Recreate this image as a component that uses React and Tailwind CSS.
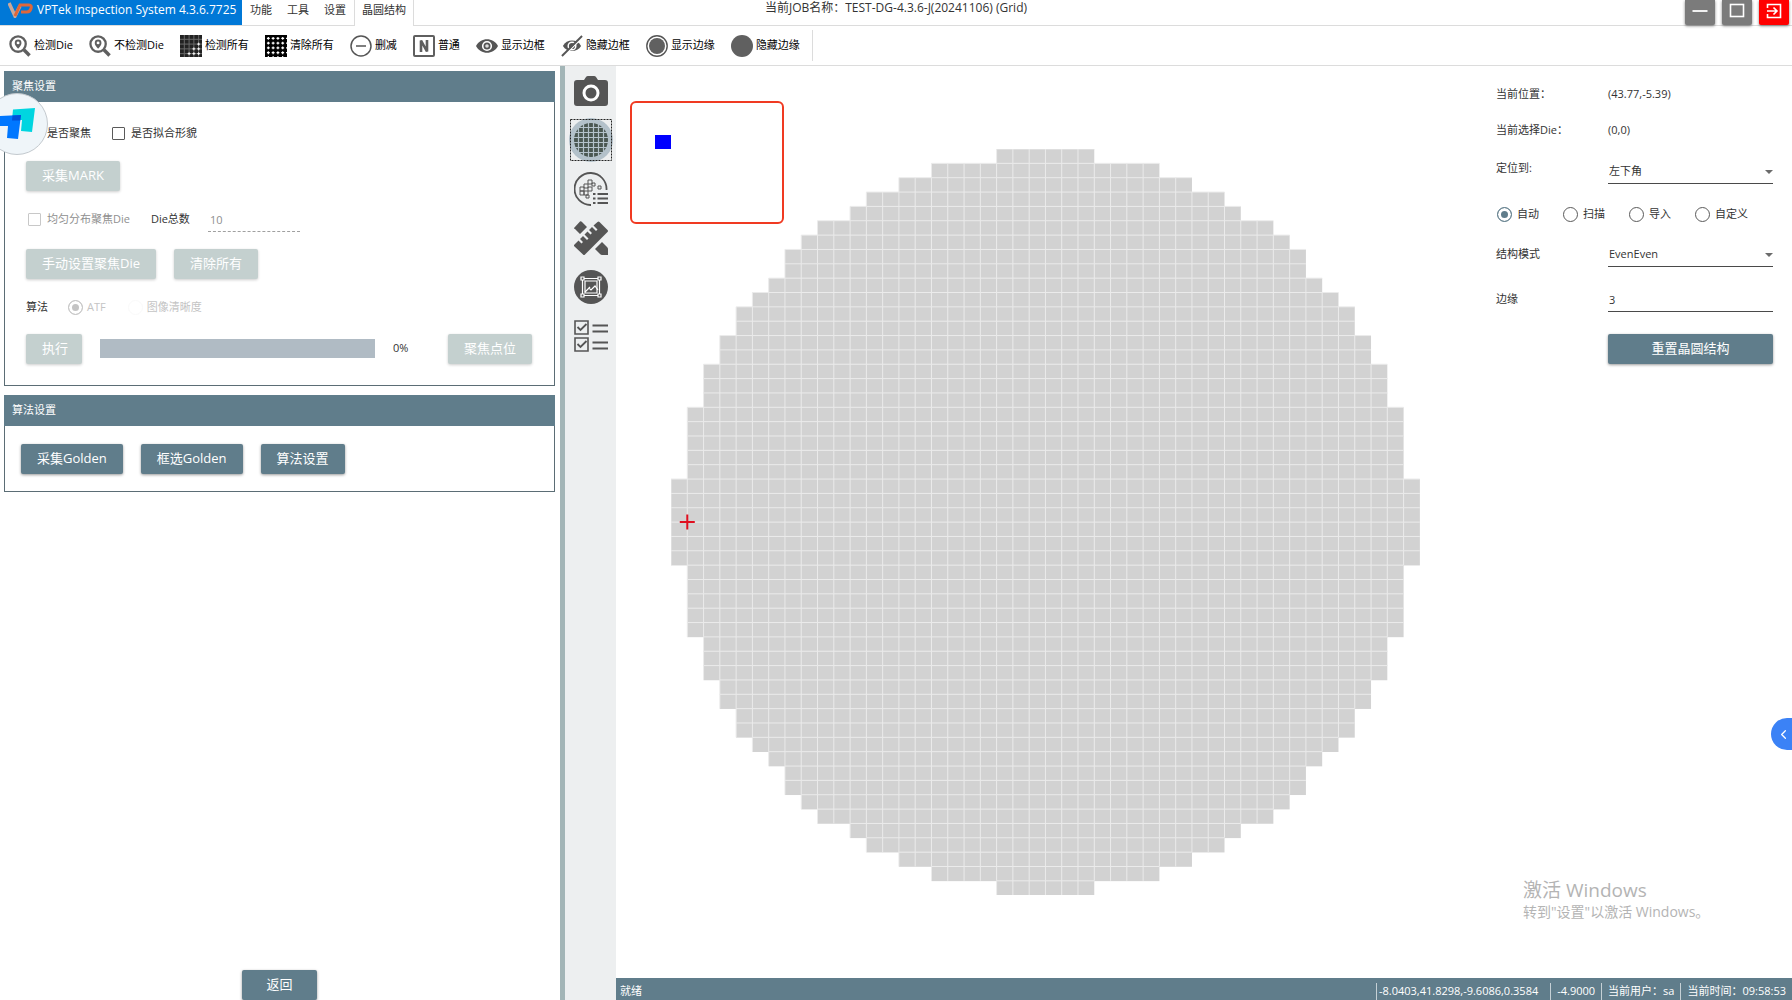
import { ChevronLeft } from 'lucide-react'
import clsx from 'clsx'

const menus = ['功能', '工具', '设置']

const toolbarItems = [
  { label: '检测Die',   icon: PinSearchIcon  },
  { label: '不检测Die', icon: PinSearchIcon  },
  { label: '检测所有',  icon: GridCheckIcon  },
  { label: '清除所有',  icon: GridClearIcon  },
  { label: '删减',      icon: MinusIcon      },
  { label: '普通',      icon: NormalIcon     },
  { label: '显示边框',  icon: EyeIcon        },
  { label: '隐藏边框',  icon: EyeOffIcon     },
  { label: '显示边缘',  icon: RingIcon       },
  { label: '隐藏边缘',  icon: DiscIcon       },
]

const railItems = [
  { label: '相机', icon: CameraIcon    },
  { label: '晶圆', icon: WaferIcon     },
  { label: '分布', icon: WaferListIcon },
  { label: '测量', icon: RulerIcon     },
  { label: '图像', icon: FrameIcon     },
  { label: '清单', icon: ChecklistIcon },
]

const modes = ['自动', '扫描', '导入', '自定义']

// First filled column of every row in the upper half, the lower half mirrors it
const rowStarts = [
  20, 16, 14, 12, 11, 9, 8, 7, 7, 6, 5, 4, 4,
  3, 3, 2, 2, 2, 1, 1, 1, 1, 1, 0, 0, 0,
]
const rows = [...rowStarts, ...[...rowStarts].reverse()]
const COLS = 46
const DIE_W = 16.28
const DIE_H = 14.35

/* ---------- toolbar icons ---------- */

function PinSearchIcon() {
  return (
    <svg width="22" height="22" viewBox="0 0 23 23" fill="none" stroke="#5f5f5f">
      <circle cx="9.5" cy="9.5" r="8" strokeWidth="2.4" />
      <path d="M15.5 15.5l6 6" strokeWidth="3.6" />
      <path d="M9.5 14.5C7 11.5 6 10 6 8.3a3.5 3.5 0 0 1 7 0c0 1.7-1 3.2-3.5 6.2z" fill="#5f5f5f" stroke="none" />
      <circle cx="9.5" cy="8.3" r="1.5" fill="#fff" stroke="none" />
    </svg>
  )
}

function GridCheckIcon() {
  return (
    <svg width="22" height="22" viewBox="0 0 23 23">
      <rect width="23" height="23" fill="#222" />
      <path d="M4.5 0v23M9.5 0v23M14.5 0v23M19.5 0v23M0 4.5h23M0 9.5h23M0 14.5h23M0 19.5h23" stroke="#6b6b6b" />
      <path d="M14.5 13v3M19.5 13v3M13 14.5h3M18 14.5h3M14.5 18v3M19.5 18v3M13 19.5h3M18 19.5h3M19.5 8v3M18 9.5h3M9.5 18v3M8 19.5h3" stroke="#fff" />
    </svg>
  )
}

function GridClearIcon() {
  return (
    <svg width="22" height="22" viewBox="0 0 23 23">
      <rect width="23" height="23" fill="#000" />
      <path
        d="M3.5 0v23M8.5 0v23M13.5 0v23M18.5 0v23M0 3.5h23M0 8.5h23M0 13.5h23M0 18.5h23"
        stroke="#fff"
        strokeWidth="1.2"
        strokeDasharray="3 2"
        strokeDashoffset="-2"
      />
    </svg>
  )
}

function MinusIcon() {
  return (
    <svg width="22" height="22" viewBox="0 0 22 22" fill="none" stroke="#555">
      <circle cx="11" cy="11" r="10" strokeWidth="1.5" />
      <path d="M6 11h10" strokeWidth="1.5" />
    </svg>
  )
}

function NormalIcon() {
  return (
    <svg width="22" height="22" viewBox="0 0 22 22" fill="none" stroke="#5f5f5f">
      <rect x="1" y="1" width="20" height="20" rx="1" strokeWidth="2" />
      <path d="M8 17V5.5L14 16.5V5" strokeWidth="2.6" />
    </svg>
  )
}

function EyeIcon() {
  return (
    <svg width="22" height="22" viewBox="0 0 22 22">
      <path d="M0 11C4.5 2 17.5 2 22 11C17.5 20 4.5 20 0 11z" fill="#555" />
      <circle cx="11" cy="11" r="4.3" fill="none" stroke="#fff" strokeWidth="1.6" />
      <circle cx="11" cy="11" r="1.8" fill="#ddd" />
    </svg>
  )
}

function EyeOffIcon() {
  return (
    <svg width="22" height="22" viewBox="0 0 23 23">
      <path d="M2 11.5C6 4 17 4 21 11.5C17 18.5 6 18.5 2 11.5z" fill="#555" />
      <circle cx="11.5" cy="11.5" r="4" fill="none" stroke="#fff" strokeWidth="1.5" />
      <path d="M2.5 22.5L23.5 1.5" stroke="#fff" strokeWidth="1.5" />
      <path d="M1 22L22 1" stroke="#555" strokeWidth="2" />
    </svg>
  )
}

function RingIcon() {
  return (
    <svg width="22" height="22" viewBox="0 0 22 22">
      <circle cx="11" cy="11" r="10.2" fill="none" stroke="#555" strokeWidth="1.4" />
      <circle cx="11" cy="11" r="8" fill="#606060" />
    </svg>
  )
}

function DiscIcon() {
  return (
    <svg width="22" height="22" viewBox="0 0 22 22">
      <circle cx="11" cy="11" r="11" fill="#606060" />
    </svg>
  )
}

/* ---------- side rail icons ---------- */

function CameraIcon() {
  return (
    <svg width="34" height="30" viewBox="0 0 34 30">
      <path d="M3 4h7l2-3q.6-1 2-1h6q1.4 0 2 1l2 3h7q3 0 3 3v20q0 3-3 3H3q-3 0-3-3V7q0-3 3-3z" fill="#555" />
      <circle cx="17" cy="17" r="7" fill="none" stroke="#fff" strokeWidth="3" />
    </svg>
  )
}

function WaferIcon() {
  return (
    <svg width="44" height="44" viewBox="0 0 44 44">
      <circle cx="22" cy="22" r="22" fill="#b3c1ca" />
      <circle cx="22" cy="22" r="17" fill="#4a5752" />
      <path
        d="M9.5 8v28M14.5 6v32M19.5 4v36M24.5 4v36M29.5 6v32M34.5 8v28M8 9.5h28M6 14.5h32M4 19.5h36M4 24.5h36M6 29.5h32M8 34.5h28"
        stroke="#b3c1ca"
        strokeWidth="1.2"
      />
      <rect x="1.5" y="1.5" width="41" height="41" fill="none" stroke="#222" strokeDasharray="2 1" />
    </svg>
  )
}

function WaferListIcon() {
  return (
    <svg width="34" height="34" viewBox="0 0 34 34" fill="none" stroke="#555">
      <path d="M17 33A16 16 0 1 1 32.5 18" strokeWidth="1.8" />
      <path d="M6 15h4v4H6zM10 12h4v4h-4zM10 19h4v4h-4zM14 15h4v4h-4zM6 19h4v4H6zM14 8h4v4h-4zM18 11h3v3h-3zM24 14h3v3h-3zM12 23h3v3h-3z" strokeWidth="1" />
      <path d="M23.5 22H34M23.5 26.5H34M23.5 31H34" strokeWidth="1.8" />
      <path d="M19 22h2.5M19 26.5h2.5M19 31h2.5" strokeWidth="1.8" />
    </svg>
  )
}

function RulerIcon() {
  return (
    <svg width="34" height="34" viewBox="0 0 34 34" fill="#555">
      <path d="M0 7L6 0.5Q7 0 8 1l5 5-7 7-5-5Q0 8 0 7z" />
      <path d="M0 24l4.5-4.5 3 3 1.5-1.5-3-3 3-3 4 4 1.5-1.5-4-4 3-3 3 3 1.5-1.5-3-3 3-3 4 4 1.5-1.5-4-4L23.5 1q1-1 2 0l8 8q1 1 0 2L11 33.5q-1 1-2 0L0 25z" />
      <path d="M21 28l7-7 5 5q1 1 1 2v6h-6q-1 0-2-1z" />
    </svg>
  )
}

function FrameIcon() {
  return (
    <svg width="34" height="34" viewBox="0 0 34 34" fill="none">
      <circle cx="17" cy="17" r="17" fill="#555" />
      <g stroke="#fff" strokeWidth="1.2">
        <path d="M10 8.5h14M10 25.5h14M8.5 10v14M25.5 10v14M11 11h12v12H11z" />
        <path d="M7 7h3v3H7zM24 7h3v3h-3zM7 24h3v3H7zM24 24h3v3h-3z" />
        <path d="M11 22l4-4 2 2 4-4 3 4M14 19l2-2" />
      </g>
    </svg>
  )
}

function ChecklistIcon() {
  return (
    <svg width="34" height="32" viewBox="0 0 34 32" fill="none" stroke="#555">
      <path d="M1 1h13v13H1zM1 18h13v13H1z" strokeWidth="1.6" />
      <path d="M3.5 7l3 3 6-6M3.5 24l3 3 6-6" strokeWidth="1.8" />
      <path d="M18.5 5.5H34M18.5 11.5H34M18.5 22.5H34M18.5 28.5H34" strokeWidth="1.8" />
    </svg>
  )
}

/* ---------- shared controls ---------- */

function Button({ children, className, disabled }) {
  return (
    <button
      disabled={disabled}
      className={clsx(
        'h-[30px] px-4 rounded-[2px] text-[13px] text-white whitespace-nowrap',
        disabled
          ? 'bg-[#c4d0cf] shadow-[0_1px_3px_rgba(0,0,0,0.2)]'
          : 'bg-[#607d8b] shadow-[0_1px_3px_rgba(0,0,0,0.4)]',
        className
      )}
    >
      {children}
    </button>
  )
}

function CheckField({ label, disabled }) {
  return (
    <label className={clsx('flex items-center gap-1.5', disabled && 'text-[#8f8f8f]')}>
      <input
        type="checkbox"
        disabled={disabled}
        className="appearance-none w-[13px] h-[13px] border-[1.5px] border-[#5a5a5a] rounded-[1px] disabled:border-[#c8c8c8]"
      />
      {label}
    </label>
  )
}

function Panel({ title, children }) {
  return (
    <section className="border border-[#5b6d75]">
      <h2 className="-mx-px -mt-px h-[31px] px-2 flex items-center bg-[#607d8b] text-white">{title}</h2>
      {children}
    </section>
  )
}

function SelectField({ id, value }) {
  return (
    <div className="relative w-[165px] shrink-0">
      <select id={id} className="appearance-none w-full h-6 px-px border-b border-[#4a4a4a] bg-transparent outline-none">
        <option>{value}</option>
      </select>
      <svg className="absolute right-0 top-2.5 pointer-events-none" width="8" height="4" viewBox="0 0 8 4">
        <path d="M0 0h8L4 4z" fill="#6b6b6b" />
      </svg>
    </div>
  )
}

/* ---------- page sections ---------- */

function TitleBar() {
  return (
    <header className="h-[26px] grid grid-cols-[1fr_auto_1fr] border-b border-[#dcdcdc]">
      <div className="flex h-[26px]">
        <div className="w-[242px] h-[25px] pl-2 pb-1.5 flex items-center gap-1 bg-[#0078d7] text-white text-[12px] whitespace-nowrap">
          <svg width="25" height="16" viewBox="0 0 25 16" fill="none">
            <path d="M1 1l6 13 5-10" stroke="#c9a79a" strokeWidth="3.5" />
            <path d="M7 14l5-11h9q3 0 2 3.5t-4 3.5h-6" stroke="#e0673a" strokeWidth="3" />
          </svg>
          <h1>VPTek Inspection System 4.3.6.7725</h1>
        </div>
        <nav className="flex">
          <div className="flex gap-[15px] px-2">
            {menus.map((label) => (
              <button key={label} className="h-5">{label}</button>
            ))}
          </div>
          <div className="h-[26px] px-[7px] bg-white border-x border-[#dcdcdc]">
            <button className="h-5">晶圆结构</button>
          </div>
        </nav>
      </div>
      <p className="text-[12px] leading-4">当前JOB名称：TEST-DG-4.3.6-J(20241106) (Grid)</p>
      <div className="flex justify-end gap-[7px] pr-[3px]">
        <button aria-label="最小化" className="w-[30px] h-[25px] pb-1 flex items-center justify-center rounded-b-[2px] bg-[#7b7b7b] shadow-[0_1px_3px_rgba(0,0,0,0.5)]">
          <svg width="16" height="16" viewBox="0 0 16 16"><path d="M0.5 8h15" stroke="#fff" strokeWidth="1.8" /></svg>
        </button>
        <button aria-label="最大化" className="w-[30px] h-[25px] pb-1 flex items-center justify-center rounded-b-[2px] bg-[#7b7b7b] shadow-[0_1px_3px_rgba(0,0,0,0.5)]">
          <svg width="16" height="16" viewBox="0 0 16 16"><rect x="1.5" y="1.5" width="13" height="12" fill="none" stroke="#fff" strokeWidth="1.6" /></svg>
        </button>
        <button aria-label="退出" className="w-[30px] h-[25px] pb-1 flex items-center justify-center rounded-b-[2px] bg-[#ff0000] shadow-[0_1px_3px_rgba(0,0,0,0.5)]">
          <svg width="16" height="16" viewBox="0 0 16 16" fill="none" stroke="#fff" strokeWidth="1.6">
            <path d="M1.5 5V1.5h13v13h-13V11M1 8h9.5M7.5 4.5L11 8l-3.5 3.5" />
          </svg>
        </button>
      </div>
    </header>
  )
}

function Toolbar() {
  return (
    <div className="h-10 flex border-b border-[#dcdcdc]">
      <div className="my-1 pl-[9px] pr-3 flex items-center gap-4 border-r border-[#dcdcdc]">
        {toolbarItems.map(({ label, icon: Icon }) => (
          <button key={label} className="flex items-center gap-[3px] whitespace-nowrap text-black">
            <Icon />
            {label}
          </button>
        ))}
      </div>
    </div>
  )
}

function FocusPanel() {
  return (
    <Panel title="聚焦设置">
      <div className="pt-4 pb-[21px] pl-[21px] pr-[22px]">
        <div className="h-[31px] pl-0.5 flex items-center gap-[21px]">
          <CheckField label="是否聚焦" />
          <CheckField label="是否拟合形貌" />
        </div>
        <div className="h-[31px] mt-3">
          <Button disabled>采集MARK</Button>
        </div>
        <div className="h-[31px] mt-3 pl-0.5 flex items-center">
          <CheckField label="均匀分布聚焦Die" disabled />
          <label htmlFor="die-total" className="ml-[21px]">Die总数</label>
          <input
            id="die-total"
            disabled
            defaultValue="10"
            className="ml-[18px] w-[92px] h-6 px-0.5 border-b border-dashed border-[#a0a0a0] text-[#8f8f8f]"
          />
        </div>
        <div className="h-[31px] mt-3.5 flex gap-[18px]">
          <Button disabled>手动设置聚焦Die</Button>
          <Button disabled>清除所有</Button>
        </div>
        <div className="h-[31px] mt-3 flex items-center text-[#c4c4c4]">
          <span className="text-[#333] mr-5">算法</span>
          <label className="flex items-center gap-1">
            <input
              type="radio"
              name="algo"
              disabled
              defaultChecked
              className="appearance-none w-[15px] h-[15px] rounded-full border border-[#c4c4c4] bg-[#c4c4c4] shadow-[inset_0_0_0_3px_#fff]"
            />
            ATF
          </label>
          <label className="ml-[22px] flex items-center gap-1">
            <input type="radio" name="algo" disabled className="appearance-none w-[15px] h-[15px] rounded-full border border-[#fafafa]" />
            图像清晰度
          </label>
        </div>
        <div className="h-[31px] mt-2.5 flex items-center">
          <Button disabled className="w-14">执行</Button>
          <div role="progressbar" aria-valuenow={0} className="ml-[18px] w-[275px] h-[19px] bg-[#b0bbc4]" />
          <span className="ml-[18px]">0%</span>
          <Button disabled className="ml-auto">聚焦点位</Button>
        </div>
      </div>
    </Panel>
  )
}

function LeftPane() {
  return (
    <div className="w-[560px] shrink-0 flex flex-col pl-1 pr-[5px] pt-[5px]">
      <FocusPanel />
      <div className="h-[9px]" />
      <Panel title="算法设置">
        <div className="flex gap-[18px] px-4 pt-[18px] pb-[17px]">
          <Button>采集Golden</Button>
          <Button>框选Golden</Button>
          <Button>算法设置</Button>
        </div>
      </Panel>
      <Button className="mt-auto mx-auto w-[75px]">返回</Button>
    </div>
  )
}

function SideRail() {
  return (
    <nav className="w-[56px] shrink-0 border-l-[5px] border-[#a3b5b7] bg-[#edeff0]">
      {railItems.map(({ label, icon: Icon }) => (
        <button key={label} aria-label={label} className="w-full h-[49px] flex items-center justify-center">
          <Icon />
        </button>
      ))}
    </nav>
  )
}

function WaferMap() {
  const width = COLS * DIE_W
  const height = rows.length * DIE_H
  return (
    <svg width={width} height={height} viewBox={`0 0 ${width} ${height}`}>
      {rows.map((start, r) => {
        const x1 = start * DIE_W
        const x2 = (COLS - start) * DIE_W
        const y = r * DIE_H
        const ticks = Array.from({ length: COLS - start * 2 }, (_, i) => x1 + i * DIE_W)
        return (
          <g key={r}>
            <rect x={x1} y={y} width={x2 - x1} height={DIE_H + 0.3} fill="#d2d2d2" />
            <path
              d={`M${x1} ${y}H${x2}` + ticks.map((x) => `M${x} ${y}v${DIE_H}`).join('')}
              stroke="#ebebeb"
            />
          </g>
        )
      })}
      <path
        d={`M${DIE_W - 7.5} ${height / 2}h15M${DIE_W} ${height / 2 - 7.5}v15`}
        stroke="#e01020"
        strokeWidth="2"
      />
    </svg>
  )
}

function WaferCanvas() {
  return (
    <div className="relative flex-1 min-w-0 flex items-center justify-center">
      <WaferMap />
      {/* Overview of the current die */}
      <div className="absolute left-3.5 top-[35px] w-[154px] h-[123px] border-2 border-[#f03a22] rounded-md">
        <div className="ml-[23px] mt-8 w-4 h-3.5 bg-[#0000ff]" />
      </div>
    </div>
  )
}

function StructureForm() {
  return (
    <aside className="w-[317px] shrink-0 flex flex-col pl-[21px] pr-[19px] pt-4">
      <dl className="grid grid-cols-[112px_1fr] gap-y-3 leading-6">
        <dt>当前位置：</dt>
        <dd>(43.77,-5.39)</dd>
        <dt>当前选择Die：</dt>
        <dd>(0,0)</dd>
      </dl>

      <div className="mt-[18px] flex justify-between">
        <label htmlFor="anchor">定位到:</label>
        <SelectField id="anchor" value="左下角" />
      </div>

      <div className="mt-[22px] pl-px flex items-center gap-6">
        {modes.map((mode, i) => (
          <label key={mode} className="flex items-center gap-[5px]">
            <input
              type="radio"
              name="mode"
              defaultChecked={i === 0}
              className="appearance-none w-[15px] h-[15px] rounded-full border border-[#5a5a5a] checked:border-[#607d8b] checked:bg-[#607d8b] checked:shadow-[inset_0_0_0_3px_#fff]"
            />
            {mode}
          </label>
        ))}
      </div>

      <div className="mt-5 flex items-center justify-between">
        <label htmlFor="structure">结构模式</label>
        <SelectField id="structure" value="EvenEven" />
      </div>

      <div className="mt-[21px] flex items-center justify-between">
        <label htmlFor="edge">边缘</label>
        <input id="edge" defaultValue="3" className="w-[165px] h-6 px-px border-b border-[#4a4a4a] outline-none" />
      </div>

      <Button className="mt-[22px] ml-auto w-[165px]">重置晶圆结构</Button>

      <div className="mt-auto mb-14 pl-[27px] text-[#b4b4b4]">
        <p className="text-[19px] leading-6">激活 Windows</p>
        <p className="text-[14px] leading-5">转到"设置"以激活 Windows。</p>
      </div>
    </aside>
  )
}

function StatusBar() {
  return (
    <footer className="h-[22px] pl-1 pr-1.5 pt-[5px] flex justify-between bg-[#607d8b] text-white">
      <span>就绪</span>
      <div className="flex whitespace-nowrap">
        <span className="border-l border-[#c5d0d5] pl-0.5 pr-3">-8.0403,41.8298,-9.6086,0.3584</span>
        <span className="border-l border-[#c5d0d5] px-1.5">-4.9000</span>
        <span className="border-l border-[#c5d0d5] px-1.5">当前用户：sa</span>
        <span className="border-l border-[#c5d0d5] pl-1.5">当前时间：09:58:53</span>
      </div>
    </footer>
  )
}

export default function App() {
  return (
    <div className="relative h-screen flex flex-col overflow-hidden bg-white text-[#333] text-[11px] font-['Open_Sans','Noto_Sans_CJK_SC',sans-serif]">
      <TitleBar />
      <Toolbar />

      <div className="flex-1 min-h-0 flex">
        <LeftPane />
        <SideRail />
        <main className="flex-1 min-w-0 flex flex-col">
          <div className="flex-1 min-h-0 flex">
            <WaferCanvas />
            <StructureForm />
          </div>
          <StatusBar />
        </main>
      </div>

      {/* Floating assistant badge */}
      <div className="absolute -left-3.5 top-[93px] w-[62px] h-[62px] rounded-full border border-[#c3c9ce] bg-[#eff5f9] flex items-center justify-center">
        <svg width="36" height="32" viewBox="0 0 36 32">
          <path d="M14 1.5L36 0l-3 24-11-1 1-11H13z" fill="#00d5e0" />
          <path d="M0 8l22-1-3 24-11-1 1-12H0z" fill="#0077ff" />
          <path d="M13.5 7.4L22 7l-.8 5.5H13z" fill="#0050d8" />
        </svg>
      </div>

      {/* Collapsed drawer handle */}
      <button aria-label="展开" className="absolute right-0 top-[718px] w-[21px] h-8 pl-1 rounded-l-full bg-[#3b82f6] text-white flex items-center justify-center">
        <ChevronLeft size={15} />
      </button>
    </div>
  )
}
